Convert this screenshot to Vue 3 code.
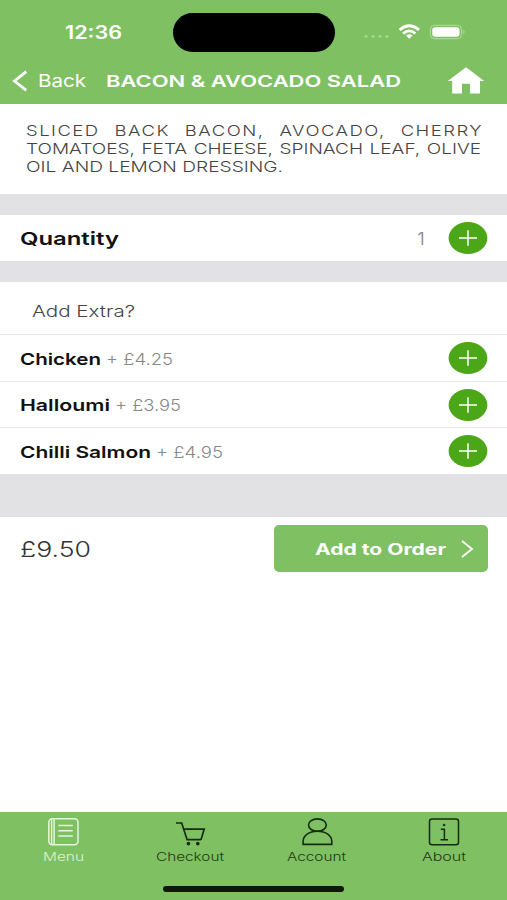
<script setup>
import { h } from 'vue'

// A single line of text drawn at an exact width; the box is as tall as its capitals.
const FitText = (props) =>
  h('svg', { class: 'fit', width: props.w, height: props.cap, overflow: 'visible' }, [
    h(
      'text',
      {
        x: 0,
        y: props.cap,
        textLength: props.w,
        lengthAdjust: 'spacingAndGlyphs',
        'font-size': props.cap / 0.727,
        fill: 'currentColor'
      },
      props.text
    )
  ])
FitText.props = ['text', 'w', 'cap']

const extras = [
  { name: 'Chicken', w: 81, price: '+ £4.25', pw: 67 },
  { name: 'Halloumi', w: 90, price: '+ £3.95', pw: 66 },
  { name: 'Chilli Salmon', w: 131, price: '+ £4.95', pw: 67 }
]
const tabs = [
  { id: 'menu', label: 'Menu', w: 41 },
  { id: 'cart', label: 'Checkout', w: 68 },
  { id: 'account', label: 'Account', w: 59 },
  { id: 'about', label: 'About', w: 44 }
]
</script>

<template>
  <div class="screen">
    <header>
      <div class="status">
        <FitText class="time" text="12:36" :w="57" :cap="13.2" />
        <div class="island"></div>
        <svg class="signals" width="106" height="20" viewBox="0 0 106 20">
          <g fill="#a5d391">
            <circle cx="6" cy="14.3" r="1.6" /><circle cx="13" cy="14.3" r="1.6" />
            <circle cx="20" cy="14.3" r="1.6" /><circle cx="27" cy="14.3" r="1.6" />
          </g>
          <g fill="none" stroke="#fff" stroke-width="2.8">
            <path d="M39.6 7.9Q49.3-.3 59 7.9" />
            <path d="M43.2 11.5Q49.3 6.3 55.4 11.5" />
          </g>
          <path d="M46 13.6Q49.3 11 52.6 13.6L49.3 16.7Z" fill="#fff" />
          <rect x="70.3" y="3.3" width="31.2" height="13.4" rx="4" fill="none" stroke="#b5dca4" />
          <rect x="72.3" y="5.2" width="27.2" height="9.6" rx="2.8" fill="#fff" />
          <path d="M103.3 7.8q2.5 2.2 0 4.4z" fill="#b5dca4" />
        </svg>
      </div>
      <div class="nav">
        <svg width="16" height="22" viewBox="0 0 16 22">
          <path d="M14.2 1.7L2.5 11L14.2 20.3" fill="none" stroke="#fff" stroke-width="2.8" />
        </svg>
        <FitText class="back" text="Back" :w="48" :cap="12.7" />
        <FitText class="title" text="BACON &amp; AVOCADO SALAD" :w="295" :cap="12" />
        <svg class="home" width="38" height="28" viewBox="0 0 38 28">
          <path d="M19 .2L37.2 14H33V26.6H23V16.8H15V26.6H5.2V14H.8Z" fill="#fff" />
        </svg>
      </div>
    </header>

    <section class="description">
      <FitText class="spread" text="SLICED BACK BACON, AVOCADO, CHERRY" :w="457" :cap="11" />
      <FitText class="even" text="TOMATOES, FETA CHEESE, SPINACH LEAF, OLIVE" :w="455" :cap="11" />
      <FitText text="OIL AND LEMON DRESSING." :w="257" :cap="11" />
    </section>

    <section class="quantity">
      <FitText class="strong" text="Quantity" :w="99" :cap="13" />
      <FitText class="count" text="1" :w="8" :cap="12.8" />
      <svg class="plus" width="40" height="34" viewBox="0 0 40 34">
        <ellipse cx="20" cy="17" rx="19.4" ry="16" fill="#4ca718" />
        <path d="M11 17H29M20 9.2V24.8" stroke="#fff" stroke-width="1.5" />
      </svg>
    </section>

    <section class="extras">
      <div class="heading"><FitText text="Add Extra?" :w="103" :cap="12" /></div>
      <div v-for="item in extras" :key="item.name" class="extra">
        <FitText class="strong" :text="item.name" :w="item.w" :cap="12" />
        <FitText class="price" :text="item.price" :w="item.pw" :cap="12" />
        <svg class="plus" width="40" height="34" viewBox="0 0 40 34">
          <ellipse cx="20" cy="17" rx="19.4" ry="16" fill="#4ca718" />
          <path d="M11 17H29M20 9.2V24.8" stroke="#fff" stroke-width="1.5" />
        </svg>
      </div>
    </section>

    <section class="order">
      <FitText class="total" text="£9.50" :w="71" :cap="16" />
      <button>
        <FitText text="Add to Order" :w="131" :cap="11.6" />
        <svg width="14" height="20" viewBox="0 0 14 20">
          <path d="M2 2L12 10L2 18" fill="none" stroke="#fff" stroke-width="1.8" />
        </svg>
      </button>
    </section>

    <footer>
      <nav>
        <div v-for="tab in tabs" :key="tab.id" class="tab" :class="tab.id">
          <svg width="34" height="30" viewBox="0 0 34 30" fill="none" stroke="currentColor" stroke-width="1.5">
            <g v-if="tab.id === 'menu'">
              <rect x="2.8" y="1.7" width="29.2" height="26" rx="3.5" />
              <path d="M5.6 2.2V27.2M8.1 2.2V27.2M12.3 8.5H26.8M12.3 13.8H26.8M12.3 19.1H26.8" />
            </g>
            <g v-else-if="tab.id === 'cart'" stroke-width="1.7">
              <path d="M3 6H8.7L14.1 22.7H28M10.9 12.2H31.2L28 22.7" />
              <circle cx="15.4" cy="26.6" r="1" fill="currentColor" />
              <circle cx="24.8" cy="26.6" r="1" fill="currentColor" />
            </g>
            <g v-else-if="tab.id === 'account'" stroke-width="1.6">
              <ellipse cx="17.4" cy="8.1" rx="8.9" ry="6.2" />
              <path d="M3.1 27.4V24.5C3.1 18.4 9 14.3 17.4 14.3S31.8 18.4 31.8 24.5V27.4Z" />
            </g>
            <g v-else>
              <rect x="2.5" y="1.9" width="29" height="25.8" rx="2.5" />
              <path d="M13.8 12.2H17.4V22.7M13.5 22.7H21" />
              <ellipse cx="17.1" cy="8" rx="1" ry=".8" fill="currentColor" stroke-width="1" />
            </g>
          </svg>
          <FitText :text="tab.label" :w="tab.w" :cap="8.7" />
        </div>
      </nav>
      <div class="indicator"></div>
    </footer>
  </div>
</template>

<style>
body {
  margin: 0;
}
</style>

<style scoped>
.screen {
  width: 507px;
  height: 900px;
  display: flex;
  flex-direction: column;
  background: #fff;
  color: #444;
  font-family: Inter, 'Liberation Sans', sans-serif;
  font-weight: 300;
}
svg {
  display: block;
  flex: none;
}
header {
  height: 103.7px;
  box-sizing: border-box;
  padding-top: 12.5px;
  background: #7fc063;
  color: #fff;
}
.status {
  height: 39.5px;
  display: flex;
  align-items: center;
  padding-left: 64.5px;
}
.time {
  font-weight: 600;
}
.island {
  width: 161.5px;
  height: 39px;
  margin-left: 51.5px;
  border-radius: 20px;
  background: #000;
}
.signals {
  margin-left: 25.5px;
}
.nav {
  display: flex;
  align-items: center;
  height: 28px;
  margin-top: 14.5px;
  padding-left: 11.5px;
}
.back {
  margin-left: 10.5px;
  font-weight: 400;
}
.title {
  margin-left: 19.5px;
  font-weight: 600;
}
.home {
  margin-left: 46px;
}
.description {
  height: 90.3px;
  box-sizing: border-box;
  padding: 21px 24px 0 26px;
  display: flex;
  flex-direction: column;
  gap: 7.1px;
}
.spread {
  letter-spacing: 1.2px;
  word-spacing: 6.8px;
}
.even {
  word-spacing: 1px;
}
.quantity {
  display: flex;
  align-items: center;
  height: 46px;
  padding: 0 19px 0 20px;
  border-top: 21px solid #e2e2e4;
  border-bottom: 21px solid #e2e2e4;
}
.quantity .fit {
  margin-top: 1px;
}
.strong {
  color: #111;
  font-weight: 600;
}
.count {
  margin-left: auto;
  color: #888;
}
.count + .plus {
  margin-left: 23px;
}
.extras {
  border-bottom: 43px solid #e2e2e4;
}
.heading {
  display: flex;
  align-items: center;
  height: 52.3px;
  padding: 6px 0 0 32px;
  box-sizing: border-box;
}
.extra {
  display: flex;
  align-items: center;
  height: 46.5px;
  box-sizing: border-box;
  border-top: 1.5px solid #e8e8ea;
  padding: 0 19px 0 20px;
}
.extra .fit {
  margin-top: 1px;
}
.price {
  margin-left: 5px;
  color: #888;
}
.extra .plus {
  margin-left: auto;
}
.order {
  display: flex;
  align-items: center;
  padding: 8.5px 19px 0 20px;
}
.total {
  color: #333;
}
button {
  display: flex;
  align-items: center;
  justify-content: flex-end;
  gap: 14px;
  width: 214px;
  height: 46.5px;
  margin: 0 0 0 auto;
  padding: 0 14.5px 0 0;
  border: 0;
  border-radius: 5px;
  background: #7fc063;
  color: #fff;
  font: inherit;
  font-weight: 700;
}
footer {
  height: 88px;
  margin-top: auto;
  background: #7fc063;
}
nav {
  display: grid;
  grid-template-columns: repeat(4, 1fr);
  height: 74px;
}
.tab {
  display: flex;
  flex-direction: column;
  align-items: center;
  padding-top: 4.5px;
  gap: 5px;
  color: #172b10;
}
.tab .fit {
  opacity: 0.9;
}
.menu {
  color: #e4f8db;
}
.indicator {
  width: 181px;
  height: 5.5px;
  margin: 0 auto;
  border-radius: 3px;
  background: #10180d;
}
</style>
